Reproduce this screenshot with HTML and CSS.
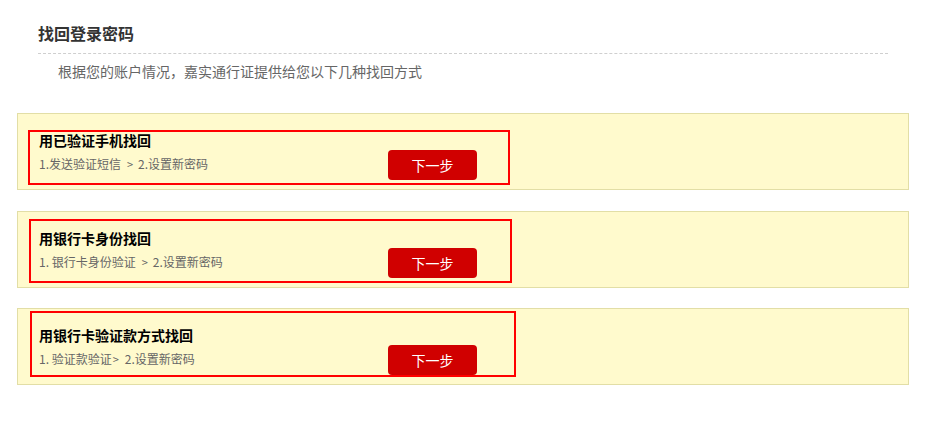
FILE: index.html
```html
<!DOCTYPE html>
<html lang="zh-CN">
<head>
<meta charset="utf-8">
<title>找回登录密码</title>
<link rel="stylesheet" href="styles.css">
</head>
<body>
<div class="page">
  <div class="head">
    <h2 class="title">找回登录密码</h2>
    <p class="desc">根据您的账户情况，嘉实通行证提供给您以下几种找回方式</p>
  </div>
  <ul class="methods">
    <li class="method">
      <div class="mark mark-1"></div>
      <div class="info">
        <h3 class="m-title">用已验证手机找回</h3>
        <p class="steps">1.发送验证短信<span class="arrow">&gt;</span>2.设置新密码</p>
      </div>
      <a class="btn" href="#">下一步</a>
    </li>
    <li class="method">
      <div class="mark mark-2"></div>
      <div class="info">
        <h3 class="m-title">用银行卡身份找回</h3>
        <p class="steps">1. 银行卡身份验证<span class="arrow">&gt;</span>2.设置新密码</p>
      </div>
      <a class="btn" href="#">下一步</a>
    </li>
    <li class="method">
      <div class="mark mark-3"></div>
      <div class="info">
        <h3 class="m-title">用银行卡验证款方式找回</h3>
        <p class="steps">1. 验证款验证<span class="arrow arrow-tight">&gt;</span>2.设置新密码</p>
      </div>
      <a class="btn" href="#">下一步</a>
    </li>
  </ul>
</div>
</body>
</html>
```

FILE: styles.css
```css
* { box-sizing: border-box; }
html, body { margin: 0; padding: 0; background: #fff; }
body {
  font-family: "Noto Sans CJK SC", "Microsoft YaHei", sans-serif;
  color: #333;
}
.page { width: 941px; }
.head { padding-left: 38px; }
.title {
  margin: 23px 0 0;
  width: 850px;
  padding-bottom: 10px;
  border-bottom: 1px dashed #cfcfcf;
  font-size: 16px;
  line-height: 20px;
  font-weight: bold;
  color: #333;
}
.desc {
  margin: 7px 0 0;
  padding-left: 20px;
  font-size: 14px;
  line-height: 20px;
  color: #666;
}
.methods {
  list-style: none;
  margin: 32px 0 0 17px;
  padding: 0;
}
.method {
  position: relative;
  display: flex;
  align-items: flex-start;
  width: 892px;
  height: 77px;
  margin-bottom: 21px;
  padding: 16px 0 0 21px;
  background: #fffacd;
  border: 1px solid #e2dea6;
}
.method:nth-child(2) { margin-bottom: 20px; }
.info { width: 349px; }
.m-title {
  margin: 0;
  font-size: 14px;
  line-height: 20px;
  font-weight: bold;
  color: #000;
}
.steps {
  margin: 4px 0 0;
  font-size: 12px;
  line-height: 20px;
  color: #666;
}
.arrow {
  display: inline-block;
  padding: 0 5px 0 6px;
  font-size: 11px;
}
.arrow-tight { padding: 0 6px 0 1px; }
.btn {
  display: block;
  width: 89px;
  height: 30px;
  margin-top: 20px;
  background: #d00000;
  border-radius: 4px;
  color: #fff;
  font-size: 14px;
  line-height: 30px;
  text-align: center;
  text-decoration: none;
}
.mark {
  position: absolute;
  border: 2px solid #ff0000;
  pointer-events: none;
}
.mark-1 { left: 10px; top: 16px; width: 482px; height: 55px; }
.mark-2 { left: 11px; top: 7px; width: 483px; height: 64px; }
.mark-3 { left: 12px; top: 2px; width: 486px; height: 66px; }
```
